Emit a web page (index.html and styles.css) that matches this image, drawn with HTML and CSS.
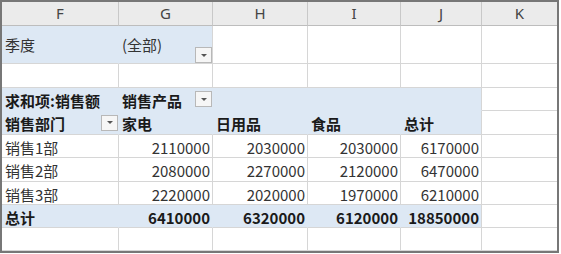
FILE: index.html
```html
<!DOCTYPE html>
<html>
<head>
<meta charset="utf-8">
<link rel="stylesheet" href="styles.css">
</head>
<body>
<div class="sheet">
  <div class="c h">F</div><div class="c h">G</div><div class="c h">H</div><div class="c h">I</div><div class="c h">J</div><div class="c h last">K</div>

  <div class="c b nr r1">季度</div>
  <div class="c b r1 split"><span>(全部)</span><span class="btn low"></span></div>
  <div class="c"></div><div class="c"></div><div class="c"></div><div class="c last"></div>

  <div class="c"></div><div class="c"></div><div class="c"></div><div class="c"></div><div class="c"></div><div class="c last"></div>

  <div class="c b nr nb bold">求和项:销售额</div>
  <div class="c b nr nb bold split"><span>销售产品</span><span class="btn"></span></div>
  <div class="c b nr nb"></div><div class="c b nr nb"></div><div class="c b nb"></div><div class="c last"></div>

  <div class="c b nr bold split"><span>销售部门</span><span class="btn"></span></div>
  <div class="c b nr bold">家电</div><div class="c b nr bold">日用品</div><div class="c b nr bold">食品</div><div class="c b bold">总计</div><div class="c last"></div>

  <div class="c">销售1部</div><div class="c num">2110000</div><div class="c num">2030000</div><div class="c num">2030000</div><div class="c num">6170000</div><div class="c last"></div>
  <div class="c">销售2部</div><div class="c num">2080000</div><div class="c num">2270000</div><div class="c num">2120000</div><div class="c num">6470000</div><div class="c last"></div>
  <div class="c">销售3部</div><div class="c num">2220000</div><div class="c num">2020000</div><div class="c num">1970000</div><div class="c num">6210000</div><div class="c last"></div>

  <div class="c b nr bold">总计</div><div class="c b nr bold num">6410000</div><div class="c b nr bold num">6320000</div><div class="c b nr bold num">6120000</div><div class="c b bold num">18850000</div><div class="c last"></div>

  <div class="c"></div><div class="c"></div><div class="c"></div><div class="c"></div><div class="c"></div><div class="c last"></div>
</div>
</body>
</html>
```

FILE: styles.css
```css
html, body {
  margin: 0;
  padding: 0;
  background: #ffffff;
}

.sheet {
  box-sizing: border-box;
  width: 559px;
  height: 253px;
  border: 2px solid #777777;
  overflow: hidden;
  display: grid;
  grid-template-columns: 117px 94px 95px 93px 81px 75px;
  grid-template-rows: 24px 38px 24px 23px 24px 23px 24px 23px 23px 23px;
  font-family: "Noto Sans CJK SC", "Noto Sans", sans-serif;
  font-size: 15px;
  color: #333333;
}

.c {
  box-sizing: border-box;
  border-right: 1px solid #d6d6d6;
  border-bottom: 1px solid #d6d6d6;
  display: flex;
  align-items: center;
  padding: 2px 2px 0 3px;
  line-height: 1;
  white-space: nowrap;
  overflow: hidden;
}

.c.last {
  border-right: none;
}

.h {
  background: #ebebeb;
  color: #444444;
  justify-content: center;
  padding: 0;
  border-right-color: #c8c8c8;
  border-bottom-color: #bdbdbd;
  font-family: "Noto Sans", sans-serif;
  font-size: 15px;
}

.b {
  background: #dde8f4;
}

.nr {
  border-right-color: #dde8f4;
}

.nb {
  border-bottom-color: #dde8f4;
}

.bold {
  font-weight: bold;
  color: #1a1a1a;
}

.num {
  justify-content: flex-end;
}

.split {
  justify-content: space-between;
  padding-right: 0;
}

.r1 {
  padding-top: 0;
}

.btn {
  box-sizing: border-box;
  width: 17px;
  height: 16px;
  border: 1px solid #b8b8b8;
  background: #f6f6f6;
  display: flex;
  align-items: center;
  justify-content: center;
  flex: none;
  margin-top: -2px;
}

.btn::after {
  content: "";
  width: 0;
  height: 0;
  border-left: 3px solid transparent;
  border-right: 3px solid transparent;
  border-top: 3px solid #555555;
}

.btn.low {
  align-self: flex-end;
  margin-top: 0;
}
```
